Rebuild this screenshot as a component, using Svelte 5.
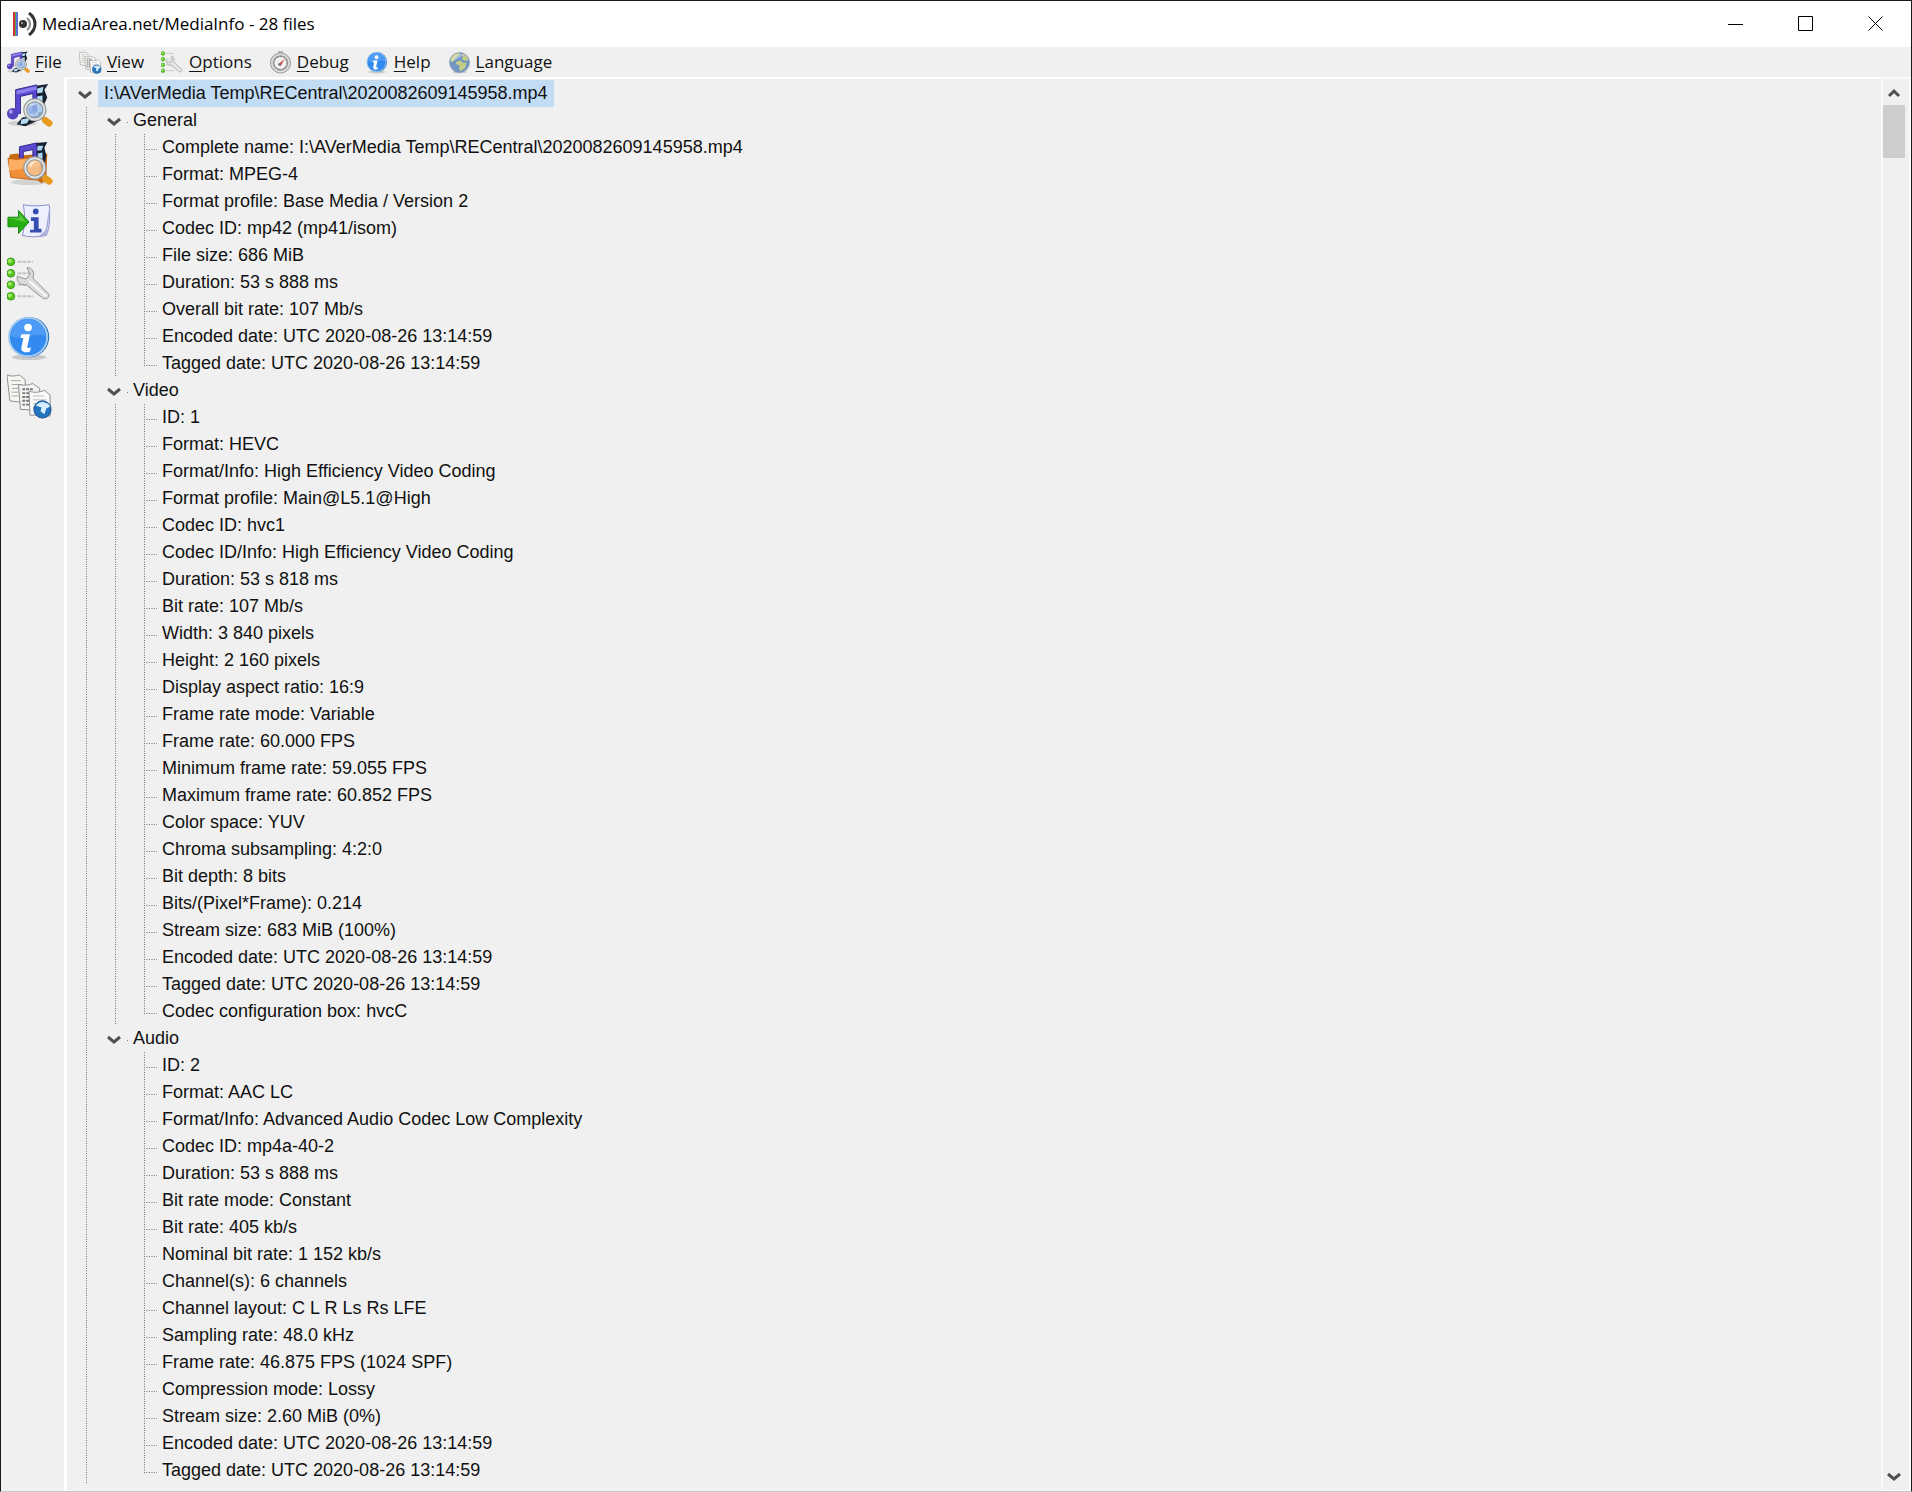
<script>
  const dates = ['Encoded date: UTC 2020-08-26 13:14:59', 'Tagged date: UTC 2020-08-26 13:14:59'];
  const file = 'I:\\AVerMedia Temp\\RECentral\\2020082609145958.mp4';

  let sections = $state([
    {
      name: 'General',
      open: true,
      items: [
        'Complete name: ' + file,
        'Format: MPEG-4',
        'Format profile: Base Media / Version 2',
        'Codec ID: mp42 (mp41/isom)',
        'File size: 686 MiB',
        'Duration: 53 s 888 ms',
        'Overall bit rate: 107 Mb/s',
        ...dates
      ]
    },
    {
      name: 'Video',
      open: true,
      items: [
        'ID: 1',
        'Format: HEVC',
        'Format/Info: High Efficiency Video Coding',
        'Format profile: Main@L5.1@High',
        'Codec ID: hvc1',
        'Codec ID/Info: High Efficiency Video Coding',
        'Duration: 53 s 818 ms',
        'Bit rate: 107 Mb/s',
        'Width: 3 840 pixels',
        'Height: 2 160 pixels',
        'Display aspect ratio: 16:9',
        'Frame rate mode: Variable',
        'Frame rate: 60.000 FPS',
        'Minimum frame rate: 59.055 FPS',
        'Maximum frame rate: 60.852 FPS',
        'Color space: YUV',
        'Chroma subsampling: 4:2:0',
        'Bit depth: 8 bits',
        'Bits/(Pixel*Frame): 0.214',
        'Stream size: 683 MiB (100%)',
        ...dates,
        'Codec configuration box: hvcC'
      ]
    },
    {
      name: 'Audio',
      open: true,
      items: [
        'ID: 2',
        'Format: AAC LC',
        'Format/Info: Advanced Audio Codec Low Complexity',
        'Codec ID: mp4a-40-2',
        'Duration: 53 s 888 ms',
        'Bit rate mode: Constant',
        'Bit rate: 405 kb/s',
        'Nominal bit rate: 1 152 kb/s',
        'Channel(s): 6 channels',
        'Channel layout: C L R Ls Rs LFE',
        'Sampling rate: 48.0 kHz',
        'Frame rate: 46.875 FPS (1024 SPF)',
        'Compression mode: Lossy',
        'Stream size: 2.60 MiB (0%)',
        ...dates
      ]
    }
  ]);

  let rootOpen = $state(true);

  const menus = [
    { label: 'File', icon: 'file' },
    { label: 'View', icon: 'view' },
    { label: 'Options', icon: 'options' },
    { label: 'Debug', icon: 'debug' },
    { label: 'Help', icon: 'info' },
    { label: 'Language', icon: 'globe' }
  ];

  const tools = [
    { label: 'Open file', icon: 'file' },
    { label: 'Open folder', icon: 'folder' },
    { label: 'Export', icon: 'export' },
    { label: 'Preferences', icon: 'options' },
    { label: 'About', icon: 'info' },
    { label: 'View mode', icon: 'view' }
  ];
</script>

{#snippet lens(glass)}
  <path d="M36 35l6 5" stroke="#a5a5a5" stroke-width="4" />
  <path d="M40 39l4 3" stroke="#e99b20" stroke-width="7" stroke-linecap="round" />
  <circle cx="29" cy="28" r="10" fill={glass} fill-opacity=".8" stroke="#8f9598" stroke-width="4" />
  <circle cx="29" cy="28" r="10" fill="none" stroke="#e1e4e4" stroke-width="2" />
  <path d="M23 26c1-4 5-6 9-4-4 0-6 2-7 6z" fill="#fff" opacity=".65" />
{/snippet}

{#snippet icon(name)}
  <svg viewBox="0 0 48 48" aria-hidden="true">
    {#if name === 'file'}
      <ellipse cx="16" cy="42" rx="15" ry="3" fill="#000" opacity=".12" />
      <path d="M29 3l14-2-4 6 3 8-3 7 2 8-4 7-18 8-9-2 6-7 16-2 2-12-4-10z" fill="#172231" />
      <path d="M31 6l7-2-1 6-6 1zM31 14l6-1v7l-5 1zM31 24l6-1v7l-6 1zM15 38l9-2-3 6-7 1z" fill="#b6dcf4" />
      <path d="M9 31V7l22-5v27h-4V11l-13 3v18z" fill="#5b49cf" stroke="#31268d" stroke-width="1" />
      <path d="M10 8l21-5v4L10 12z" fill="#8d80ed" />
      <circle cx="6" cy="32" r="6" fill="#5444bd" />
      <circle cx="4" cy="30" r="2" fill="#a69ef0" />
      {@render lens('#a9c9ee')}
      <circle cx="27" cy="28" r="5" fill="#7e9de0" opacity=".6" />
    {:else if name === 'folder'}
      <ellipse cx="23" cy="43" rx="19" ry="3" fill="#000" opacity=".12" />
      <path d="M2 18l1-4 8-1 3 2 28-2-1 28-5 3z" fill="#c56b14" />
      <path d="M30 2l12-1-3 6 2 8-2 12-7 4z" fill="#142131" />
      <path d="M32 5h6l-2 5h-5zM32 13l5-1v7h-5z" fill="#acd4ed" />
      <path d="M13 20V6l18-4v21h-4V9l-10 2v10z" fill="#5b49cf" stroke="#31268d" stroke-width="1" />
      <path d="M1 18l9 1 17-2 8 1-1 23L4 38z" fill="#f0903b" stroke="#c46512" stroke-width="1" />
      <path d="M2 19l8 1 17-2 7 1v7L2 31z" fill="#ffb76d" opacity=".8" />
      {@render lens('#f6c698')}
    {:else if name === 'export'}
      <path d="M17 6c9 2 18 1 27 0 1 11 1 23-3 32-9 2-18 2-25 0 3-10 3-21 1-32z" fill="#eff0ff" stroke="#8789ca" stroke-width="1" />
      <path d="M44 10c0 12-1 22-4 28l-8 1c6-3 9-6 9-11z" fill="#a9acd8" />
      <circle cx="30" cy="13" r="3" fill="#354eb0" />
      <path d="M25 19h8v12h3v4H24v-3h4v-9h-3z" fill="#354eb0" />
      <path d="M1 19h11v-7l11 12-11 12v-7H1z" fill="#27ae13" stroke="#13890b" stroke-width="1" />
      <path d="M2 20h11v-5l7 9z" fill="#6ed44b" opacity=".75" />
    {:else if name === 'options'}
      {#each [5, 17, 29, 41] as y}
        <path d="M11 {y}h16" stroke="#b0b0b0" stroke-width="2" stroke-dasharray="4 1" opacity=".7" />
        <circle cx="4" cy={y} r="4" fill="#5ac51c" stroke="#35961d" stroke-width="1" />
        <circle cx="3" cy={y - 1} r="2" fill="#a1ee69" />
      {/each}
      <path d="M11 20c-2 5 3 10 9 9l16 13c4 4 10 0 7-4L27 22c2-5 0-11-6-11l3 7-4 5-4-1z" fill="#dbdbdb" stroke="#929292" stroke-width="1" />
      <path d="M23 25l18 16" stroke="#fafafa" stroke-width="2" />
    {:else if name === 'info'}
      <ellipse cx="23" cy="44" rx="18" ry="3" fill="#000" opacity=".16" />
      <circle cx="23" cy="23" r="21" fill="#1765bf" />
      <circle cx="22" cy="23" r="20" fill="#3289ef" stroke="#a7ceed" stroke-width="2" />
      <path d="M4 22a18 18 0 0 1 36 0c-10-5-24 5-36 0z" fill="#65aafb" opacity=".55" />
      <circle cx="22" cy="13" r="4" fill="#fff" />
      <path d="M15 20h9l-3 14c1 1 3 0 4 0l-1 4c-4 2-10 1-9-4l2-10h-3z" fill="#fff" />
    {:else if name === 'view'}
      <path d="M0 2c5 2 9 1 13 0l6 5v24c-6-1-11-1-16-2z" fill="#f6f6f3" stroke="#8a8a8a" stroke-width="1" />
      <path d="M4 8h10M5 12h10M5 16h10M5 20h9M5 24h7" stroke="#a5a5a5" />
      <path d="M12 12c5 1 10 1 15-1l7 5v23c-7 0-14-1-20-1z" fill="#f4f4f2" stroke="#8a8a8a" stroke-width="1" />
      <path d="M16 17h12M16 21h14M16 25h14M16 29h14M16 33h14" stroke="#777" stroke-width="2" stroke-dasharray="3 1" />
      <path d="M23 19c6 2 12 1 16-1l6 5v22c-7-1-15-1-21-1z" fill="#fafaf9" stroke="#8a8a8a" stroke-width="1" />
      <path d="M27 24h12M27 28h14M27 32h13M27 36h9" stroke="#bbb" />
      <circle cx="37" cy="38" r="9" fill="#2673be" stroke="#164d90" stroke-width="1" />
      <path d="M30 34c2-3 5-3 7-4l6 2 2 3-4 2-2 6-4-3 1-4z" fill="#d6efff" />
    {:else if name === 'debug'}
      <circle cx="24" cy="25" r="21" fill="#c9c9c9" stroke="#9a9a9a" stroke-width="2" />
      <circle cx="24" cy="25" r="18" fill="none" stroke="#f0f0f0" stroke-width="2" stroke-dasharray="5 2" />
      <circle cx="24" cy="25" r="14" fill="#f3f3f3" stroke="#868686" stroke-width="3" stroke-dasharray="6 1" />
      <path d="M19 28l14-12-9 16z" fill="#d54236" />
      <circle cx="22" cy="28" r="3" fill="#777" />
      <path d="M19 2h10" stroke="#9a9a9a" stroke-width="3" />
    {:else}
      <ellipse cx="24" cy="44" rx="16" ry="3" fill="#000" opacity=".14" />
      <circle cx="24" cy="24" r="21" fill="#7295c4" stroke="#7b90ac" stroke-width="1" />
      <path d="M5 19C8 9 15 4 25 4l-4 7-5 2-2 6-6 5zM30 5c7 3 12 8 13 14l-8 2-6-5 2-4zM17 23l9-3 6 5 7-1-3 11-9 7-4-5 1-7-8-3z" fill="#c3cd86" />
      <path d="M6 21C9 8 22 3 35 9c-10 1-14 10-29 12z" fill="#fff" opacity=".38" />
    {/if}
  </svg>
{/snippet}

{#snippet chevron(up)}
  <svg class="chevron" viewBox="0 0 14 10" aria-hidden="true">
    <path d={up ? 'M2 8l5-5 5 5' : 'M1 2l6 5 6-5'} />
  </svg>
{/snippet}

<div class="window">
  <header class="title-bar">
    <svg class="logo" viewBox="0 0 24 24" aria-hidden="true">
      <path d="M1 0v24" stroke="#d5332c" stroke-width="2" />
      <path d="M3 0v24" stroke="#49a957" stroke-width="2" />
      <path d="M4 0v24" stroke="#586fe0" stroke-width="2" />
      <circle cx="10" cy="12" r="4" fill="#333" />
      <circle cx="9" cy="11" r="1" fill="#aaa" />
      <path d="M14 6c4 3 4 9 0 12" fill="none" stroke="#888" stroke-width="2" />
      <path d="M16 1c8 6 8 16 0 22" fill="none" stroke="#333" stroke-width="3" />
    </svg>
    <h1>MediaArea.net/MediaInfo - 28 files</h1>
    <div class="controls">
      <button aria-label="Minimize"><svg viewBox="0 0 16 16"><path d="M0 8.500h15" /></svg></button>
      <button aria-label="Maximize"><svg viewBox="0 0 16 16"><path d="M.5.500h14v14H.5z" /></svg></button>
      <button aria-label="Close"><svg viewBox="0 0 16 16"><path d="M.5.500l14 14M14.500.500l-14 14" /></svg></button>
    </div>
  </header>

  <nav class="menu-bar" aria-label="Main menu">
    {#each menus as menu}
      <button>{@render icon(menu.icon)}<span><u>{menu.label[0]}</u>{menu.label.slice(1)}</span></button>
    {/each}
  </nav>

  <div class="body">
    <aside class="tools">
      {#each tools as tool}
        <button aria-label={tool.label}>{@render icon(tool.icon)}</button>
      {/each}
    </aside>

    <main>
      <div class="row">
        <button class="cell toggle" aria-label="Toggle file" aria-expanded={rootOpen} onclick={() => (rootOpen = !rootOpen)}>
          {@render chevron(false)}
        </button>
        <span class="label selected">{file}</span>
      </div>
      {#if rootOpen}
        <ul>
          {#each sections as section, i}
            <li>
              <div class="row">
                <span class="cell line"></span>
                <button class="cell toggle" aria-label="Toggle {section.name}" aria-expanded={section.open} onclick={() => (section.open = !section.open)}>
                  {@render chevron(false)}
                </button>
                <span class="label">{section.name}</span>
              </div>
              {#if section.open}
                <ul>
                  {#each section.items as item, j}
                    <li class="row">
                      <span class="cell line"></span>
                      <span class="cell" class:line={i < sections.length - 1}></span>
                      <span class="cell branch" class:last={j === section.items.length - 1}></span>
                      <span class="label">{item}</span>
                    </li>
                  {/each}
                </ul>
              {/if}
            </li>
          {/each}
        </ul>
      {/if}
    </main>

    <div class="scroll-bar">
      <button aria-label="Scroll up">{@render chevron(true)}</button>
      <div class="thumb"></div>
      <button class="down" aria-label="Scroll down">{@render chevron(false)}</button>
    </div>
  </div>
</div>

<style>
  :global(body) {
    margin: 0;
    background: #f0f0f0;
  }

  .window {
    box-sizing: border-box;
    min-height: 100vh;
    display: flex;
    flex-direction: column;
    border: 1px solid #1b191c;
    border-bottom-color: #c8c8c8;
    background: #f0f0f0;
    color: #111;
    font: 18px/27px "Liberation Sans", Arial, sans-serif;
  }

  button {
    padding: 0;
    border: 0;
    background: none;
    color: inherit;
    font: inherit;
  }

  svg {
    display: block;
    flex: none;
    fill: none;
  }

  .title-bar {
    display: flex;
    align-items: center;
    height: 46px;
    padding-left: 12px;
    background: #fff;
    color: #000;
  }

  .logo {
    width: 24px;
    height: 24px;
  }

  h1 {
    margin: 0 auto 0 5px;
    font: 17px/24px "Open Sans", "Noto Sans", sans-serif;
    white-space: nowrap;
  }

  .controls {
    display: flex;
    height: 100%;
  }

  .controls button {
    display: grid;
    place-items: center;
    width: 70px;
  }

  .controls svg {
    width: 16px;
    height: 16px;
    stroke: #000;
    stroke-width: 1;
  }

  .menu-bar {
    display: flex;
    gap: 17px;
    height: 30px;
    padding-left: 6px;
    font: 17px/30px "Open Sans", "Noto Sans", sans-serif;
  }

  .menu-bar button {
    display: flex;
    align-items: center;
    gap: 5px;
  }

  .menu-bar svg {
    width: 23px;
    height: 23px;
  }

  u {
    text-underline-offset: 3px;
    text-decoration-thickness: 1px;
  }

  .body {
    flex: 1;
    display: flex;
  }

  .tools {
    display: flex;
    flex-direction: column;
    gap: 12px;
    width: 57px;
    padding: 6px 0 0 6px;
  }

  .tools svg {
    width: 46px;
    height: 46px;
  }

  main {
    flex: 1;
    min-width: 0;
    padding: 1px 0 4px 4px;
    border-left: 3px solid #fff;
    border-top: 2px solid #fff;
  }

  ul {
    margin: 0;
    padding: 0;
    list-style: none;
  }

  .row {
    display: flex;
    height: 27px;
    white-space: nowrap;
  }

  .cell {
    flex: none;
    width: 29px;
    background-repeat: no-repeat;
  }

  .line {
    background-image: repeating-linear-gradient(#777 0 1px, transparent 1px 2px, #aaa 2px 4px, transparent 4px 5px);
    background-size: 1px 100%;
    background-position: 15px 0;
  }

  .branch {
    background-image:
      repeating-linear-gradient(#777 0 1px, transparent 1px 2px, #aaa 2px 4px, transparent 4px 5px),
      repeating-linear-gradient(90deg, #777 0 1px, transparent 1px 2px, #aaa 2px 4px, transparent 4px 5px);
    background-size: 1px 100%, 13px 1px;
    background-position: 15px 0, 15px 15px;
  }

  .branch.last {
    background-size: 1px 16px, 13px 1px;
  }

  .toggle {
    display: flex;
    align-items: center;
    padding: 2px 0 0 7px;
    background-image: linear-gradient(#777, #777);
    background-size: 1px 1px;
    background-position: 27px 15px;
  }

  .chevron {
    width: 14px;
    height: 10px;
    stroke: #505050;
    stroke-width: 3;
  }

  .label {
    padding-left: 4px;
  }

  .selected {
    margin-left: -2px;
    padding: 0 6px;
    background: #c2dcf3;
  }

  .scroll-bar {
    display: flex;
    flex-direction: column;
    width: 22px;
    padding: 1px 4px 1px 0;
    border: 2px solid #fafafa;
    border-bottom-width: 1px;
  }

  .scroll-bar button {
    display: grid;
    place-items: center;
    height: 25px;
  }

  .scroll-bar .down {
    margin-top: auto;
  }

  .thumb {
    height: 53px;
    background: #cdcdcd;
  }
</style>
